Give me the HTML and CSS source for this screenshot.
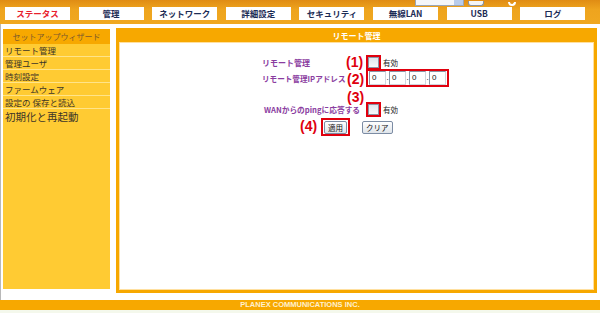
FILE: index.html
```html
<!DOCTYPE html>
<html lang="ja">
<head>
    <meta charset="UTF-8">
    <title>リモート管理</title>
<link rel="stylesheet" href="styles.css">
</head>
<body>
<div class="header">
    <div class="topbar">
        <span class="lang"><span class="lang-arrow"></span></span>
        <span class="go"></span>
        <span class="ring"></span>
    </div>
    <ul class="nav">
        <li class="nav-item current">ステータス</li>
        <li class="nav-item">管理</li>
        <li class="nav-item">ネットワーク</li>
        <li class="nav-item">詳細設定</li>
        <li class="nav-item">セキュリティ</li>
        <li class="nav-item">無線LAN</li>
        <li class="nav-item">USB</li>
        <li class="nav-item">ログ</li>
    </ul>
</div>

<div class="content">
    <!-- 左メニュー -->
    <div class="side">
        <div class="side-title">セットアップウィザード</div>
        <div class="side-item">リモート管理</div>
        <div class="side-item">管理ユーザ</div>
        <div class="side-item">時刻設定</div>
        <div class="side-item">ファームウェア</div>
        <div class="side-item">設定の 保存と読込</div>
        <div class="side-item big">初期化と再起動</div>
    </div>

    <!-- メイン -->
    <div class="main">
        <div class="main-title">リモート管理</div>
        <div class="main-body">
            <div class="form">
                <div class="label">リモート管理</div>
                <div class="cell">
                    <span class="mark"><span class="check"></span></span><span class="opt">有効</span>
                </div>

                <div class="label ipl">リモート管理IPアドレス</div>
                <div class="cell">
                    <span class="mark ip">
                        <span class="ipbox">0</span><span class="dot">.</span><span class="ipbox">0</span><span class="dot">.</span><span class="ipbox">0</span><span class="dot">.</span><span class="ipbox">0</span>
                    </span>
                </div>

                <div class="label wan">WANからのpingに応答する</div>
                <div class="cell wan">
                    <span class="mark"><span class="check"></span></span><span class="opt">有効</span>
                </div>

                <div class="buttons">
                    <span class="mark btn-mark"><span class="btn">適用</span></span>
                    <span class="btn">クリア</span>
                </div>

                <span class="num n1">(1)</span>
                <span class="num n2">(2)</span>
                <span class="num n3">(3)</span>
                <span class="num n4">(4)</span>
            </div>
        </div>
    </div>
</div>

<div class="footer">PLANEX COMMUNICATIONS INC.</div>
<div class="under"></div>
</body>
</html>
```

FILE: styles.css
```css
* {
    margin: 0;
    padding: 0;
    box-sizing: border-box;
}
body {
    width: 600px;
    height: 313px;
    overflow: hidden;
    background: #ffffff;
    font-family: "Noto Sans CJK JP", "Liberation Sans", sans-serif;
    font-size: 8px;
}

/* ヘッダー */
.header {
    height: 24px;
    background: linear-gradient(#e08c14, #eea41e 40%, #f0a820);
}
.topbar {
    height: 6px;
    display: flex;
    align-items: flex-end;
    padding-left: 415px;
    overflow: hidden;
}
.lang {
    width: 49px;
    height: 6px;
    background: #f4f6fa;
    border: 1px solid #9aa6b8;
    border-top: none;
    position: relative;
}
.lang-arrow {
    position: absolute;
    right: 0;
    top: 0;
    width: 9px;
    height: 5px;
    background: #b8ccec;
}
.go {
    width: 16px;
    height: 5px;
    margin-left: 4px;
    background: #f4f4f4;
    border: 1px solid #8892a0;
    border-top: none;
    border-radius: 0 0 3px 3px;
}
.ring {
    width: 8px;
    height: 4px;
    margin-left: 24px;
    border: 2px solid #ffffff;
    border-top: none;
    border-radius: 0 0 5px 5px;
}
.nav {
    list-style: none;
    display: flex;
    gap: 8.6px;
    padding-left: 5px;
    margin-top: 1px;
}
.nav-item {
    width: 65px;
    height: 13px;
    background: #ffffff;
    color: #1c2c55;
    font-weight: bold;
    font-size: 8.5px;
    line-height: 13px;
    text-align: center;
}
.nav-item.current {
    color: #e8202c;
}

/* 本体 */
.content {
    display: flex;
    align-items: flex-start;
    height: 276px;
    border-left: 1px solid #b8b8b8;
    padding-left: 2px;
}
.side {
    width: 107px;
    height: 260px;
    margin-top: 5px;
    background: #ffcb33;
}
.side-title {
    height: 15px;
    background: #f7a800;
    color: #7c5a2c;
    text-align: center;
    line-height: 15px;
    font-size: 8px;
}
.side-item {
    height: 13px;
    line-height: 12px;
    padding-left: 2px;
    color: #3c3428;
    font-size: 8.5px;
    border-bottom: 1px solid #ffe48a;
}
.side-item.big {
    height: 15px;
    line-height: 15px;
    font-size: 10.5px;
    border-bottom: none;
}

.main {
    width: 481px;
    height: 265px;
    margin-left: 6px;
    margin-top: 4px;
    border: 3px solid #f7a800;
    display: flex;
    flex-direction: column;
}
.main-title {
    height: 11px;
    background: #f7a800;
    color: #ffffff;
    font-weight: bold;
    text-align: center;
    line-height: 9px;
    font-size: 8px;
}
.main-body {
    flex: 1;
    border: 1px solid #ffe0a0;
    padding: 11px 0 0 142px;
}

/* フォーム */
.form {
    position: relative;
    display: grid;
    grid-template-columns: 104px auto;
    grid-auto-rows: 16px;
    align-items: center;
}
.label {
    color: #8a3ca0;
    font-weight: bold;
    font-size: 8px;
    white-space: nowrap;
}
.label.ipl {
    font-size: 7.6px;
}
.label.wan {
    padding-left: 2px;
    margin-top: 30px;
    font-size: 7.7px;
}
.cell {
    display: flex;
    align-items: center;
}
.cell.wan {
    margin-top: 30px;
}
.mark {
    display: inline-flex;
    align-items: center;
    border: 2px solid #e0000e;
}
.check {
    width: 11px;
    height: 11px;
    border: 1px solid #8a96a8;
    background: linear-gradient(#dfe6ee, #f8fafc);
}
.opt {
    margin-left: 2px;
    color: #222222;
    font-size: 7.5px;
}
.mark.ip {
    height: 18px;
    padding: 0 1px;
}
.ipbox {
    width: 17px;
    height: 14px;
    border: 1px solid #8a96a6;
    border-right-color: #d0d6de;
    border-bottom-color: #d0d6de;
    font-family: "Liberation Sans", sans-serif;
    font-size: 8px;
    line-height: 12px;
    padding-left: 2px;
    color: #111111;
}
.dot {
    width: 3px;
    text-align: center;
    line-height: 18px;
    font-family: "Liberation Sans", sans-serif;
}
.buttons {
    grid-column: 1 / 3;
    display: flex;
    align-items: center;
    padding-left: 59px;
    margin-top: 34px;
    height: 18px;
}
.btn-mark {
    padding: 0 1px;
    height: 18px;
}
.btn {
    display: inline-block;
    height: 13px;
    line-height: 11px;
    padding: 0 3px;
    border: 1px solid #7c8ca4;
    border-radius: 2px;
    background: linear-gradient(#ffffff, #dfe4ea);
    color: #111111;
    font-size: 7.5px;
}
.btn-mark + .btn {
    margin-left: 12px;
}

/* 注記番号 */
.num {
    position: absolute;
    color: #e0000e;
    font-family: "Liberation Sans", sans-serif;
    font-weight: bold;
    font-size: 14px;
    line-height: 16px;
}
.n1 { left: 84px; top: 0; }
.n2 { left: 85px; top: 17px; }
.n3 { left: 85px; top: 35px; }
.n4 { left: 38px; top: 64px; }

/* フッター */
.footer {
    height: 10px;
    background: #f7a800;
    color: #fff1cf;
    font-family: "Liberation Sans", sans-serif;
    font-weight: bold;
    font-size: 7.5px;
    line-height: 10px;
    text-align: center;
}
.under {
    height: 5px;
    background: #f4f8ec;
}
```
